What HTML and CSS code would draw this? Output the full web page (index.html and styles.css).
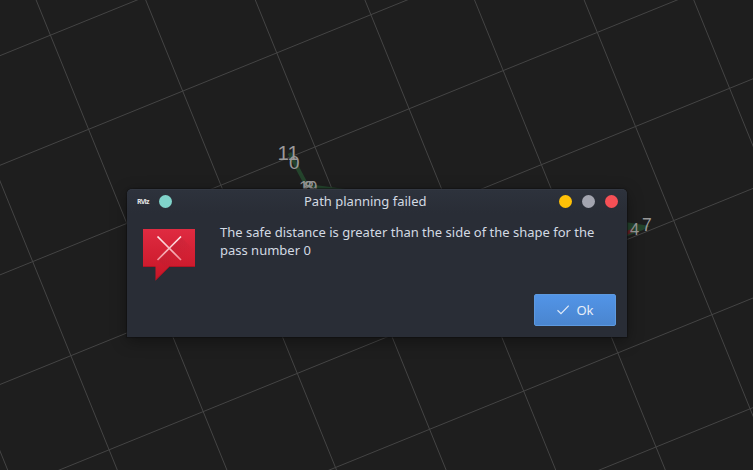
FILE: index.html
```html
<!DOCTYPE html>
<html lang="en">
<head>
<meta charset="utf-8">
<title>Path planning failed</title>
<link rel="stylesheet" href="styles.css">
</head>
<body>
<svg class="scene" viewBox="0 0 753 470" aria-hidden="true">
  <g class="grid" transform="matrix(94.1 -38.2 38.2 94.1 315 147)">
    <path d="M-9 -6H9M-9 -5H9M-9 -4H9M-9 -3H9M-9 -2H9M-9 -1H9M-9 0H9M-9 1H9M-9 2H9M-9 3H9M-9 4H9M-9 5H9M-9 6H9"/>
    <path d="M-6 -9V9M-5 -9V9M-4 -9V9M-3 -9V9M-2 -9V9M-1 -9V9M0 -9V9M1 -9V9M2 -9V9M3 -9V9M4 -9V9M5 -9V9M6 -9V9"/>
  </g>
  <path class="route" d="M289.500 153L307 186L345 191"/>
  <path class="area" d="M625 222L650 226L643 230L625 237Z"/>
  <path class="mark" d="M625 232L633 228V232L625 236Z"/>
  <g class="points">
    <text x="277.500" y="159.500" font-size="20.500">11</text>
    <text x="289" y="168.500" font-size="19">0</text>
    <text x="299" y="192.500" font-size="17">1</text>
    <text x="303" y="192.500" font-size="17">6</text>
    <text x="304.500" y="192.500" font-size="17">8</text>
    <text x="308" y="192.500" font-size="17">9</text>
    <text x="630" y="235" font-size="16.500">4</text>
    <text x="642" y="231" font-size="17.500">7</text>
  </g>
</svg>
<main class="desktop">
  <section class="dialog" role="alertdialog">
    <header class="titlebar">
      <div class="side">
        <span class="app">RViz</span>
        <span class="dot teal"></span>
      </div>
      <h1 class="title">Path planning failed</h1>
      <div class="side controls">
        <span class="dot yellow"></span>
        <span class="dot gray"></span>
        <span class="dot red"></span>
      </div>
    </header>
    <div class="content">
      <svg class="error" width="52" height="52" viewBox="0 0 52 52">
        <defs>
          <linearGradient id="bubble" x2="0" y2="1"><stop stop-color="#df2b41"/><stop offset="1" stop-color="#c71526"/></linearGradient>
          <linearGradient id="cross" gradientUnits="userSpaceOnUse" x1="0" y1="7" x2="0" y2="32"><stop stop-color="#ffeef0"/><stop offset="1" stop-color="#f08a94"/></linearGradient>
          <linearGradient id="shade" x2="1" y2="1"><stop stop-color="#8e2030" stop-opacity=".3"/><stop offset=".75" stop-color="#8e2030" stop-opacity="0"/></linearGradient>
        </defs>
        <path fill="url(#bubble)" d="M0 0H52V38H26L12.500 51.500V38H0Z"/>
        <path fill="url(#shade)" d="M38 8L50 20V38H22L15 31L26 19Z"/>
        <path fill="none" stroke="#a91120" stroke-opacity=".8" d="M0 37.500H12.500M26 37.500H52M26 38L12.500 51"/>
        <path fill="none" stroke="url(#cross)" stroke-width="1.700" d="M14.500 7.500L38 31M38 7.500L14.500 31"/>
      </svg>
      <p class="message">The safe distance is greater than the side of the shape for the pass number 0</p>
    </div>
    <footer class="actions">
      <button class="ok"><svg width="12" height="10" viewBox="0 0 12 10"><path d="M.5 5.300L4 8.700L11.700 .7"/></svg>Ok</button>
    </footer>
  </section>
</main>
</body>
</html>
```
FILE: styles.css
```css
* { box-sizing: border-box; }
body {
  margin: 0;
  height: 470px;
  overflow: hidden;
  background: #1e1e1e;
  font-family: "Noto Sans", sans-serif;
  font-size: 13px;
}
.scene { position: absolute; inset: 0; width: 753px; height: 470px; }
.grid path { fill: none; stroke: #444; stroke-width: 1px; vector-effect: non-scaling-stroke; }
.route { fill: none; stroke: #24442c; stroke-width: 4; }
.area { fill: #24442c; }
.mark { fill: #681f22; }
.points { fill: #999; font-family: "Liberation Sans", sans-serif; }
.desktop { position: relative; padding: 189px 0 0 127px; }
.dialog {
  display: flex;
  flex-direction: column;
  width: 500px;
  height: 148px;
  background: #292d36;
  border-radius: 5px 5px 0 0;
  box-shadow: 0 4px 16px rgba(0, 0, 0, .38), 0 0 1px 1px rgba(20, 20, 22, .6);
  color: #d3dae3;
}
.titlebar {
  display: grid;
  grid-template-columns: 167px 1fr auto;
  align-items: center;
  height: 24px;
  padding: 0 9px 0 10px;
  border-top: 1px solid #333842;
  border-radius: 5px 5px 0 0;
  background: linear-gradient(#2d323c, #292d36);
}
.title { margin: 0; padding-bottom: 2px; font-size: 13px; font-weight: 400; line-height: 18px; }
.side { display: flex; align-items: center; }
.controls { justify-content: flex-end; gap: 10px; }
.app { width: 22px; font: 700 7px/10px "Open Sans", sans-serif; letter-spacing: -.8px; color: #e4e4e4; }
.dot { width: 13px; height: 13px; border-radius: 50%; }
.teal { background: #80d3ca; }
.yellow { background: #ffc107; }
.gray { background: #a3a5b0; }
.red { background: #f65056; }
.content { display: flex; gap: 25px; padding: 16px 16px 0; }
.error { flex: none; }
.message { margin: -6px 0 0; width: 390px; line-height: 18px; }
.actions { display: flex; justify-content: flex-end; margin-top: auto; padding: 0 11px 11px 0; }
.ok {
  display: flex;
  align-items: center;
  justify-content: center;
  gap: 7px;
  width: 82px;
  height: 32px;
  padding: 0 0 0 1px;
  border: 1px solid #5d99df;
  border-radius: 2px;
  background: linear-gradient(#5294e7, #4a85cf);
  color: #e8eef8;
  font: inherit;
}
.ok path { fill: none; stroke: #e0eaf8; stroke-width: 1.2; }
```
